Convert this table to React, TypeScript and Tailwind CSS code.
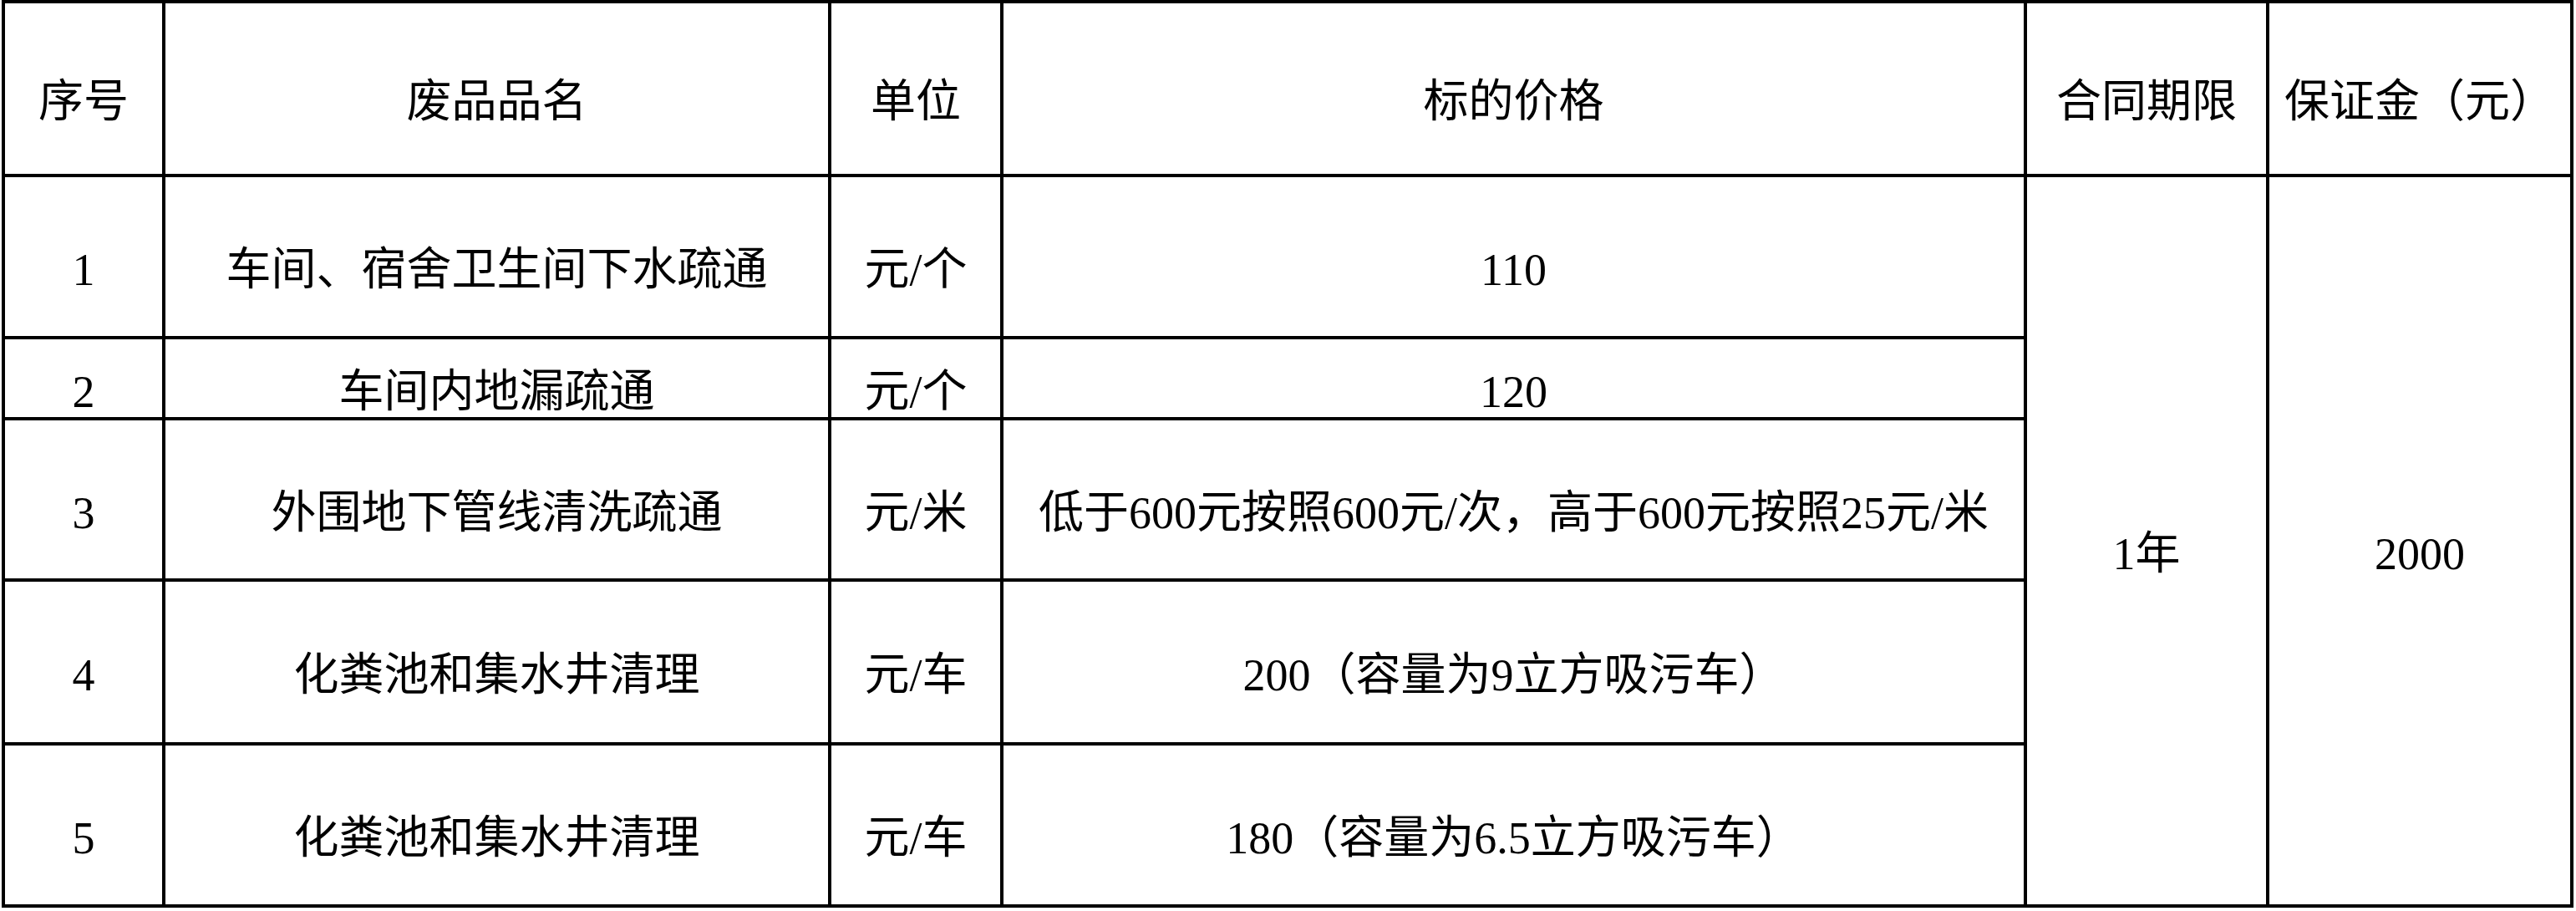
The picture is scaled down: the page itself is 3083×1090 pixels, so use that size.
import React from "react";

const headers = ["序号", "废品品名", "单位", "标的价格", "合同期限", "保证金（元）"];

const rows = [
  { no: "1", name: "车间、宿舍卫生间下水疏通", unit: "元/个", price: "110" },
  { no: "2", name: "车间内地漏疏通", unit: "元/个", price: "120" },
  { no: "3", name: "外围地下管线清洗疏通", unit: "元/米", price: "低于600元按照600元/次，高于600元按照25元/米" },
  { no: "4", name: "化粪池和集水井清理", unit: "元/车", price: "200（容量为9立方吸污车）" },
  { no: "5", name: "化粪池和集水井清理", unit: "元/车", price: "180（容量为6.5立方吸污车）" },
];

function Cell({ children, className = "" }: { children?: React.ReactNode; className?: string }) {
  return (
    <div className={`flex items-center justify-center whitespace-nowrap bg-white pt-[32px] leading-none ${className}`}>
      {children}
    </div>
  );
}

export default function App() {
  return (
    <div className="min-h-[1090px] w-[3083px] bg-white">
      <div
        className="ml-[2px] grid w-max grid-cols-[188px_793px_202px_1221px_286px_360px] grid-rows-[204px_190px_93px_189px_192px_190px] gap-[4px] bg-black p-[4px] text-[54px] text-black"
        style={{ fontFamily: '"Liberation Serif", "Noto Sans CJK SC", serif' }}
      >
        {headers.map((h) => (
          <Cell key={h}>{h}</Cell>
        ))}
        {rows.map((r, i) => (
          <React.Fragment key={r.no}>
            <Cell>{r.no}</Cell>
            <Cell>{r.name}</Cell>
            <Cell>{r.unit}</Cell>
            <Cell>{r.price}</Cell>
            {i === 0 && (
              <>
                <Cell className="row-span-5">1年</Cell>
                <Cell className="row-span-5">2000</Cell>
              </>
            )}
          </React.Fragment>
        ))}
      </div>
    </div>
  );
}
